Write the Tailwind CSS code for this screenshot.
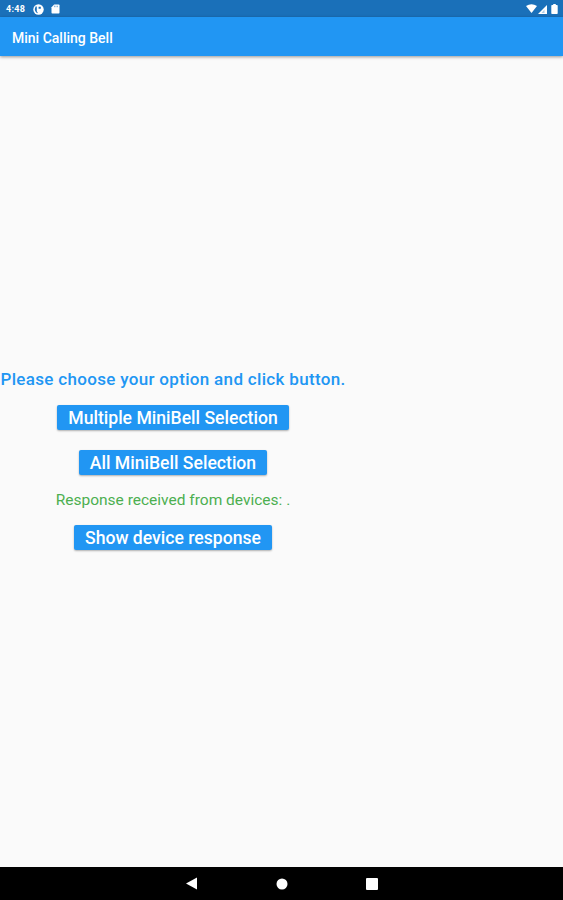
<!DOCTYPE html>
<html lang="en"><head><meta charset="utf-8"><title>Mini Calling Bell</title>
<script src="https://cdn.jsdelivr.net/npm/@tailwindcss/browser@4"></script></head>
<body class="font-['Roboto',sans-serif]">
<div class="w-[563px] h-[900px] flex flex-col bg-[#fafafa] overflow-hidden">
<div class="h-[17px] shrink-0 bg-[#1a70b9] text-white flex items-center pl-[6px] pr-[5px]">
<span class="text-[9px] font-bold leading-none w-[27px] pt-[2px] tracking-[.3px]">4:48</span>
<svg class="w-[11px] h-[11px] mt-px" viewBox="0 0 11 11"><circle cx="5.500" cy="5.500" r="5.200" fill="#fff"/><path d="M2.600 2.500h1.200v4.700l1.200 2C2.800 8.800 1.700 6.800 1.800 5zM5.600 2.800h2.200v2H5.600z" fill="#1a70b9"/></svg>
<svg class="w-[9px] h-[10px] ml-[7px] mt-px" viewBox="0 0 9 10"><path d="M3.200.5h4.500q.8 0 .8.8v7.400q0 .8-.8.8H1.300q-.8 0-.8-.8V3.200z" fill="#fff"/><path d="M3.500 1.700v1.500M5 1.700v1.500M6.500 1.700v1.500" stroke="#1a70b9" stroke-width=".5"/></svg>
<div class="grow"></div>
<svg class="w-[11px] h-[9px]" viewBox="0 0 11 9"><path d="M0 2Q5.500-1.500 11 2L5.500 9z" fill="#fff"/></svg>
<svg class="w-[9px] h-[9px] ml-px mt-px" viewBox="0 0 9 9"><path d="M0 9 9 0v9z" fill="#fff"/><path d="M3.500 8 6.500 4.500V8z" fill="#1a70b9" opacity=".35"/></svg>
<svg class="w-[7px] h-[10px] ml-[4px] mt-px" viewBox="0 0 7 10"><path d="M2.200 0h2.600v1H6q.7 0 .7.7v7.600q0 .7-.7.7H1q-.7 0-.7-.7V1.700Q.3 1 1 1h1.200z" fill="#fff"/></svg>
</div>
<header class="h-[39px] shrink-0 bg-[#2196f3] shadow-[0_1px_3px_rgba(0,0,0,.4)] flex items-center pl-[12px]"><h1 class="text-white text-[14px] leading-none font-medium whitespace-nowrap pt-[2px]">Mini Calling Bell</h1></header>
<main class="grow w-[346px] flex flex-col items-center pt-[312px] text-[17.600px] font-medium whitespace-nowrap">
<p class="text-[#2196f3] text-[17px] tracking-[.320px] h-[22px] leading-[22px]">Please choose your option and click button.</p>
<button class="mt-[15px] w-[232px] h-[25px] bg-[#2196f3] text-white rounded-[2px] shadow-[0_1px_2px_rgba(0,0,0,.3)] leading-[25px] pt-px">Multiple MiniBell Selection</button>
<button class="mt-[20px] w-[188px] h-[25px] bg-[#2196f3] text-white rounded-[2px] shadow-[0_1px_2px_rgba(0,0,0,.3)] leading-[25px] pt-px">All MiniBell Selection</button>
<p class="mt-[14px] text-[#4caf50] text-[15.500px] font-normal h-[22px] leading-[22px]">Response received from devices: .</p>
<button class="mt-[14px] w-[198px] h-[25px] bg-[#2196f3] text-white rounded-[2px] shadow-[0_1px_2px_rgba(0,0,0,.3)] leading-[25px] pt-px">Show device response</button>
</main>
<nav class="h-[33px] shrink-0 bg-black flex items-center justify-center gap-[78px]">
<svg class="w-[12px] h-[13px]" viewBox="0 0 12 13"><path d="M0 6.500 11 .5v12z" fill="#fff"/></svg>
<svg class="w-[12px] h-[12px]" viewBox="0 0 12 12"><circle cx="6" cy="6" r="5.500" fill="#fff"/></svg>
<svg class="w-[12px] h-[12px]" viewBox="0 0 12 12"><rect width="12" height="12" rx="1" fill="#fff"/></svg>
</nav></div></body></html>
